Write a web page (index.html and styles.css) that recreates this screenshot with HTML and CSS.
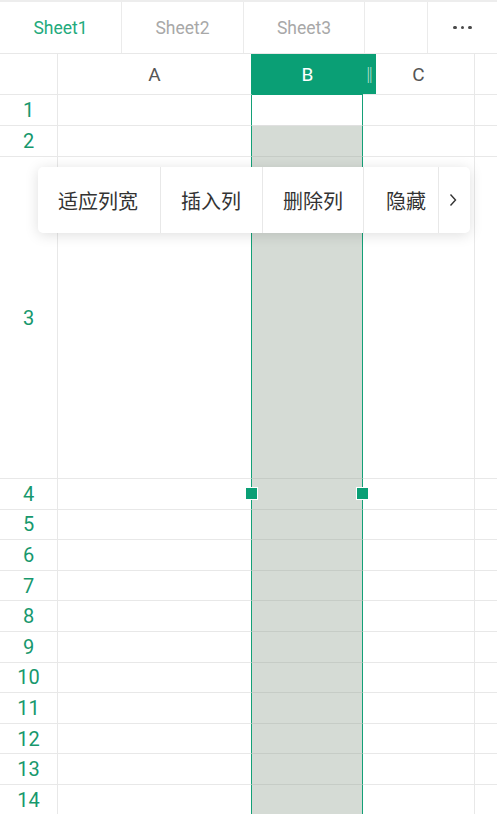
FILE: index.html
```html
<!DOCTYPE html>
<html lang="zh-CN">
<head>
  <meta charset="UTF-8" />
  <meta name="viewport" content="width=device-width, initial-scale=1.0"/>
  <title>表格</title>
  <link rel="stylesheet" href="styles.css">
</head>
<body>
  <nav class="tabs">
    <div class="tab active">Sheet1</div>
    <div class="tab">Sheet2</div>
    <div class="tab">Sheet3</div>
    <div class="tab blank"></div>
    <div class="tab more"><span></span><span></span><span></span></div>
  </nav>

  <main class="sheet">
    <div class="row head">
      <div class="cell num"></div>
      <div class="cell a">A</div>
      <div class="cell b">B<span class="resize">‖</span></div>
      <div class="cell">C</div>
      <div class="cell last"></div>
    </div>
    <div class="row">
      <div class="cell num">1</div>
      <div class="cell a"></div>
      <div class="cell b current"></div>
      <div class="cell"></div>
      <div class="cell last"></div>
    </div>
    <div class="row">
      <div class="cell num">2</div>
      <div class="cell a"></div>
      <div class="cell b"></div>
      <div class="cell"></div>
      <div class="cell last"></div>
    </div>
    <div class="row tall">
      <div class="cell num">3</div>
      <div class="cell a"></div>
      <div class="cell b"></div>
      <div class="cell"></div>
      <div class="cell last"></div>
    </div>
    <div class="row small">
      <div class="cell num">4</div>
      <div class="cell a"></div>
      <div class="cell b">
        <span class="handle left"></span>
        <span class="handle right"></span>
      </div>
      <div class="cell"></div>
      <div class="cell last"></div>
    </div>
    <div class="row small">
      <div class="cell num">5</div>
      <div class="cell a"></div>
      <div class="cell b"></div>
      <div class="cell"></div>
      <div class="cell last"></div>
    </div>
    <div class="row small">
      <div class="cell num">6</div>
      <div class="cell a"></div>
      <div class="cell b"></div>
      <div class="cell"></div>
      <div class="cell last"></div>
    </div>
    <div class="row small">
      <div class="cell num">7</div>
      <div class="cell a"></div>
      <div class="cell b"></div>
      <div class="cell"></div>
      <div class="cell last"></div>
    </div>
    <div class="row small">
      <div class="cell num">8</div>
      <div class="cell a"></div>
      <div class="cell b"></div>
      <div class="cell"></div>
      <div class="cell last"></div>
    </div>
    <div class="row small">
      <div class="cell num">9</div>
      <div class="cell a"></div>
      <div class="cell b"></div>
      <div class="cell"></div>
      <div class="cell last"></div>
    </div>
    <div class="row small">
      <div class="cell num">10</div>
      <div class="cell a"></div>
      <div class="cell b"></div>
      <div class="cell"></div>
      <div class="cell last"></div>
    </div>
    <div class="row small">
      <div class="cell num">11</div>
      <div class="cell a"></div>
      <div class="cell b"></div>
      <div class="cell"></div>
      <div class="cell last"></div>
    </div>
    <div class="row small">
      <div class="cell num">12</div>
      <div class="cell a"></div>
      <div class="cell b"></div>
      <div class="cell"></div>
      <div class="cell last"></div>
    </div>
    <div class="row small">
      <div class="cell num">13</div>
      <div class="cell a"></div>
      <div class="cell b"></div>
      <div class="cell"></div>
      <div class="cell last"></div>
    </div>
    <div class="row small">
      <div class="cell num">14</div>
      <div class="cell a"></div>
      <div class="cell b"></div>
      <div class="cell"></div>
      <div class="cell last"></div>
    </div>

    <div class="menu">
      <div class="item">适应列宽</div>
      <div class="item">插入列</div>
      <div class="item">删除列</div>
      <div class="item">隐藏</div>
      <div class="item arrow">
        <svg width="8" height="14" viewBox="0 0 8 14">
          <polyline points="1.5,1.5 6.5,7 1.5,12.5" fill="none" stroke="#333" stroke-width="1.4"/>
        </svg>
      </div>
    </div>
  </main>
</body>
</html>
```

FILE: styles.css
```css
* {
  box-sizing: border-box;
  font-family: Roboto, "Noto Sans CJK SC", sans-serif;
}

body {
  margin: 0;
  padding: 0;
  background: white;
  color: #333;
  height: 814px;
  overflow: hidden;
}

.tabs {
  display: flex;
  height: 54px;
  border-top: 2px solid #ededed;
  border-bottom: 1px solid #e8e8e8;
}

.tab {
  width: 122px;
  display: flex;
  align-items: center;
  justify-content: center;
  border-right: 1px solid #ebebeb;
  font-size: 17.5px;
  color: #a8a8a8;
}

.tab:nth-child(3) {
  width: 121px;
}

.tab.active {
  color: #23aa7c;
}

.tab.blank {
  width: 63px;
}

.tab.more {
  flex: 1;
  border-right: none;
  gap: 4px;
}

.more span {
  width: 3.5px;
  height: 3.5px;
  border-radius: 50%;
  background: #4a4a4a;
}

.sheet {
  position: relative;
}

.row {
  display: grid;
  grid-template-columns: 58px 194px 111px 112px 1fr;
  height: 31px;
}

.row.head {
  height: 41px;
}

.row.tall {
  height: 322px;
}

.row.small {
  height: 30.6px;
}

.cell {
  display: flex;
  align-items: center;
  justify-content: center;
  border-right: 1px solid #e8e8e8;
  border-bottom: 1px solid #e8e8e8;
}

.cell.last {
  border-right: none;
}

.cell.num {
  font-size: 20px;
  color: #17986d;
}

.head .cell {
  font-size: 19px;
  color: #555;
}

.cell.a {
  border-right-color: #14a077;
}

.cell.b {
  position: relative;
  background: #d5dbd5;
  border-right-color: #14a077;
  border-bottom-color: #c6ccc6;
}

.cell.b.current {
  background: white;
  border-bottom-color: #e0e0e0;
}

.head .cell.a {
  border-right-color: #0a9f75;
}

.head .cell.b {
  background: #0a9f75;
  color: white;
  border-right: none;
  border-bottom: none;
}

.resize {
  position: absolute;
  top: 0;
  right: -13px;
  width: 13px;
  height: 40px;
  background: #0a9f75;
  display: flex;
  align-items: center;
  justify-content: center;
  font-size: 16px;
  color: #e8f6f1;
}

.handle {
  position: absolute;
  top: 50%;
  width: 13px;
  height: 13px;
  margin-top: -7px;
  background: #0a9f75;
  border: 1.5px solid white;
}

.handle.left {
  left: -7px;
}

.handle.right {
  right: -7px;
}

.menu {
  position: absolute;
  top: 113px;
  left: 38px;
  width: 432px;
  height: 66px;
  display: flex;
  background: white;
  border-radius: 5px;
  box-shadow: 0 2px 14px rgba(0, 0, 0, 0.13);
}

.item {
  display: flex;
  align-items: center;
  padding: 0 20px;
  font-size: 20px;
  color: #333;
  white-space: nowrap;
  border-right: 1px solid #e8e8e8;
}

.item:nth-child(1) {
  width: 123px;
}

.item:nth-child(2) {
  width: 102px;
}

.item:nth-child(3) {
  width: 101px;
}

.item:nth-child(4) {
  width: 75px;
  padding: 0 0 0 22px;
}

.item.arrow {
  flex: 1;
  padding: 0 0 0 10px;
  border-right: none;
}
```
